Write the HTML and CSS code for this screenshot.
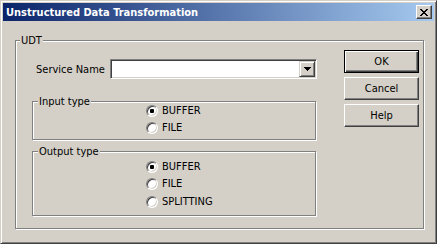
FILE: index.html
```html
<!DOCTYPE html>
<html lang="en">
<head>
  <meta charset="UTF-8" />
  <title>Unstructured Data Transformation</title>
  <link rel="stylesheet" href="styles.css">
</head>
<body>
  <div class="dialog">
    <!-- Caption -->
    <div class="titlebar">
      <span class="title">Unstructured Data Transformation</span>
      <button type="button" class="close" aria-label="Close">
        <svg width="8" height="7" viewBox="0 0 8 7" shape-rendering="crispEdges">
          <path d="M0 0h2v1h-2z M6 0h2v1h-2z M1 1h2v1h-2z M5 1h2v1h-2z M2 2h4v1h-4z M3 3h2v1h-2z M2 4h4v1h-4z M1 5h2v1h-2z M5 5h2v1h-2z M0 6h2v1h-2z M6 6h2v1h-2z" fill="#000"/>
        </svg>
      </button>
    </div>

    <div class="client">
      <fieldset class="group udt">
        <legend>UDT</legend>
        <div class="udt-body">
          <div class="settings">
            <!-- Service -->
            <div class="service-row">
              <label for="service">Service Name</label>
              <div class="combo">
                <input type="text" id="service" name="service" />
                <span class="combo-btn">
                  <svg width="7" height="4" viewBox="0 0 7 4" shape-rendering="crispEdges">
                    <path d="M0 0h7v1h-1v1h-1v1h-1v1h-1v-1h-1v-1h-1v-1h-1z" fill="#000"/>
                  </svg>
                </span>
              </div>
            </div>

            <!-- Input type -->
            <fieldset class="group type-group input-type">
              <legend>Input type</legend>
              <div class="options">
                <label class="option"><input type="radio" name="inputType" value="BUFFER" checked /> BUFFER</label>
                <label class="option"><input type="radio" name="inputType" value="FILE" /> FILE</label>
              </div>
            </fieldset>

            <!-- Output type -->
            <fieldset class="group type-group output-type">
              <legend>Output type</legend>
              <div class="options">
                <label class="option"><input type="radio" name="outputType" value="BUFFER" checked /> BUFFER</label>
                <label class="option"><input type="radio" name="outputType" value="FILE" /> FILE</label>
                <label class="option last"><input type="radio" name="outputType" value="SPLITTING" /> SPLITTING</label>
              </div>
            </fieldset>
          </div>

          <div class="actions">
            <button type="button" class="btn default">OK</button>
            <button type="button" class="btn">Cancel</button>
            <button type="button" class="btn">Help</button>
          </div>
        </div>
      </fieldset>
    </div>
  </div>
</body>
</html>
```

FILE: styles.css
```css
body {
  margin: 0;
  background-color: #d4d0c8;
  font-family: "DejaVu Sans Condensed", "DejaVu Sans", sans-serif;
  font-stretch: condensed;
  font-size: 11px;
  color: #000;
}

.dialog {
  width: 437px;
  height: 244px;
  box-sizing: border-box;
  border: 1px solid;
  border-color: #d4d0c8 #404040 #404040 #d4d0c8;
  box-shadow: inset 1px 1px #fff, inset -1px -1px #808080;
  padding: 2px;
  background-color: #d4d0c8;
}

.titlebar {
  height: 18px;
  display: flex;
  align-items: center;
  justify-content: space-between;
  padding: 0 2px 0 3px;
  background: linear-gradient(to right, #0a246a, #a6caf0);
}

.title {
  color: #fff;
  font-weight: bold;
}

.close {
  width: 16px;
  height: 14px;
  box-sizing: border-box;
  padding: 0;
  border: 1px solid;
  border-color: #fff #404040 #404040 #fff;
  box-shadow: inset -1px -1px #808080;
  background-color: #d4d0c8;
  display: flex;
  align-items: center;
  justify-content: center;
}

.client {
  padding: 13px 10px 0 12px;
}

.group {
  margin: 0;
  padding: 0;
  border: 1px solid #808080;
  box-shadow: inset 1px 1px #fff, 1px 1px #fff;
}

.group legend {
  margin-left: 4px;
  padding: 0 1px;
  line-height: 13px;
  background-color: #d4d0c8;
}

.udt-body {
  display: flex;
  gap: 27px;
  padding: 3px 3px 12px 16px;
}

.settings {
  width: 285px;
  display: flex;
  flex-direction: column;
}

.service-row {
  display: flex;
  align-items: center;
  justify-content: space-between;
  margin-top: 9px;
  padding-left: 4px;
}

.combo {
  width: 207px;
  height: 20px;
  box-sizing: border-box;
  display: flex;
  padding: 1px;
  border: 1px solid;
  border-color: #808080 #fff #fff #808080;
  box-shadow: inset 1px 1px #404040, inset -1px -1px #d4d0c8;
  background-color: #fff;
}

.combo input {
  flex: 1;
  min-width: 0;
  border: none;
  outline: none;
  padding: 0 2px;
  background: transparent;
  font: inherit;
}

.combo-btn {
  width: 16px;
  height: 16px;
  box-sizing: border-box;
  border: 1px solid;
  border-color: #d4d0c8 #404040 #404040 #d4d0c8;
  box-shadow: inset 1px 1px #fff, inset -1px -1px #808080;
  background-color: #d4d0c8;
  display: flex;
  align-items: center;
  justify-content: center;
}

.type-group {
  width: 284px;
  box-sizing: border-box;
}

.type-group legend {
  margin-left: 5px;
}

.input-type {
  margin-top: 16px;
}

.output-type {
  margin-top: 5px;
}

.options {
  display: flex;
  flex-direction: column;
  padding: 0 0 3px 113px;
}

.input-type .options {
  margin-top: -6px;
}

.output-type .options {
  padding-bottom: 5px;
}

.option {
  height: 17px;
  display: flex;
  align-items: center;
  gap: 4px;
}

.option.last {
  margin-top: 1px;
}

.option input {
  appearance: none;
  width: 12px;
  height: 12px;
  box-sizing: border-box;
  margin: 0;
  border-radius: 50%;
  border: 1px solid;
  border-color: #808080 #fff #fff #808080;
  box-shadow: inset 1px 1px #404040, inset -1px -1px #d4d0c8;
  background-color: #fff;
  display: grid;
  place-content: center;
}

.option input:checked::before {
  content: "";
  width: 4px;
  height: 4px;
  border-radius: 1px;
  background-color: #000;
}

.actions {
  width: 75px;
  display: flex;
  flex-direction: column;
  gap: 4px;
}

.btn {
  height: 23px;
  padding: 0;
  border: 1px solid;
  border-color: #fff #404040 #404040 #fff;
  box-shadow: inset -1px -1px #808080;
  background-color: #d4d0c8;
  font: inherit;
  color: #000;
}

.btn.default {
  border-color: #000;
  box-shadow: inset 1px 1px #fff, inset -1px -1px #404040, inset -2px -2px #808080;
}
```
